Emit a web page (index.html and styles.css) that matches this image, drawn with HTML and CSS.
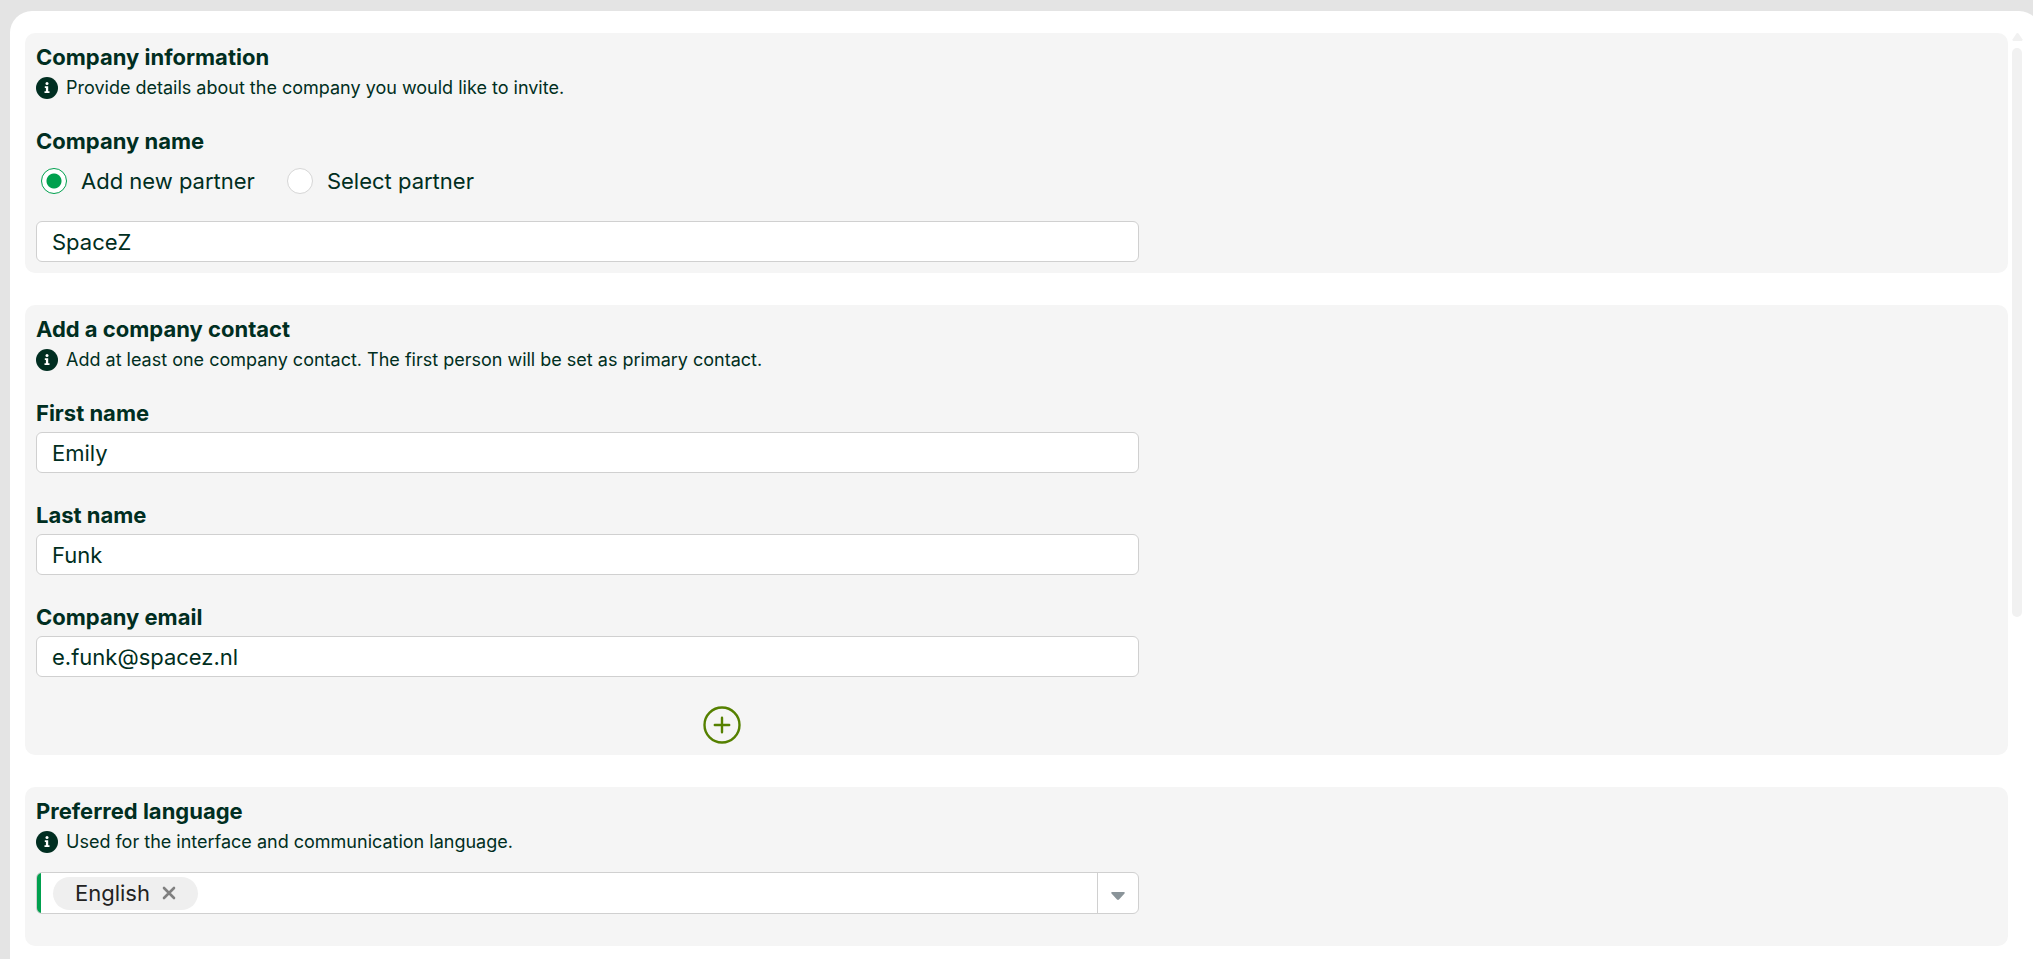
FILE: index.html
```html
<!DOCTYPE html>
<html lang="en">
<head>
    <meta charset="UTF-8">
    <meta name="viewport" content="width=device-width, initial-scale=1.0">
    <title>Invite company</title>
    <link rel="stylesheet" href="styles.css">
</head>
<body>
    <!-- Info icon shared by the hints -->
    <svg class="sprite" aria-hidden="true">
        <symbol id="icon-info" viewBox="0 0 22 22">
            <circle cx="11" cy="11" r="11" fill="#002e21"/>
            <circle cx="11" cy="6.6" r="1.5" fill="#fff"/>
            <path d="M8.8 9.2h3.4v5h1.3v1.8H8.5v-1.8h1.4V11H8.8z" fill="#fff"/>
        </symbol>
    </svg>

    <div class="panel">
        <form class="sections">
            <!-- Company information -->
            <section class="card">
                <h2>Company information</h2>
                <p class="hint">
                    <svg class="hint-icon" aria-hidden="true"><use href="#icon-info"/></svg>
                    Provide details about the company you would like to invite.
                </p>

                <div class="field">
                    <label for="companyName">Company name</label>
                    <div class="radios">
                        <label class="radio"><input type="radio" name="partner" value="new" checked> Add new partner</label>
                        <label class="radio"><input type="radio" name="partner" value="existing"> Select partner</label>
                    </div>
                    <input class="text-input" type="text" id="companyName" value="SpaceZ">
                </div>
            </section>

            <!-- Company contact -->
            <section class="card">
                <h2>Add a company contact</h2>
                <p class="hint">
                    <svg class="hint-icon" aria-hidden="true"><use href="#icon-info"/></svg>
                    Add at least one company contact. The first person will be set as primary contact.
                </p>

                <div class="field">
                    <label for="firstName">First name</label>
                    <input class="text-input" type="text" id="firstName" value="Emily">
                </div>
                <div class="field">
                    <label for="lastName">Last name</label>
                    <input class="text-input" type="text" id="lastName" value="Funk">
                </div>
                <div class="field">
                    <label for="companyEmail">Company email</label>
                    <input class="text-input" type="email" id="companyEmail" value="e.funk@spacez.nl">
                </div>

                <div class="add-row">
                    <button class="add-button" type="button" aria-label="Add contact">
                        <svg viewBox="0 0 38 38" fill="none" stroke="#558000" stroke-width="2.4" stroke-linecap="round" aria-hidden="true">
                            <circle cx="19" cy="19" r="17.5"/>
                            <path d="M19 11.8v14.4M11.8 19h14.4"/>
                        </svg>
                    </button>
                </div>
            </section>

            <!-- Preferred language -->
            <section class="card card-language">
                <h2><label for="language">Preferred language</label></h2>
                <p class="hint">
                    <svg class="hint-icon" aria-hidden="true"><use href="#icon-info"/></svg>
                    Used for the interface and communication language.
                </p>

                <div class="tag-select">
                    <span class="tag">
                        English
                        <button class="tag-remove" type="button" aria-label="Remove English">
                            <svg viewBox="0 0 14 14" stroke="#808080" stroke-width="2.6" stroke-linecap="round" aria-hidden="true">
                                <path d="M2 2l10 10M12 2L2 12"/>
                            </svg>
                        </button>
                    </span>
                    <select id="language">
                        <option value=""></option>
                    </select>
                    <span class="arrow">
                        <svg viewBox="0 0 14 8" aria-hidden="true">
                            <path d="M1 0h12q1.5.6.5 1.6L8 7.500q-1 .9-2 0L.5 1.600Q-.5.6 1 0z" fill="#8a9499"/>
                        </svg>
                    </span>
                </div>
            </section>
        </form>

        <div class="scrollbar" aria-hidden="true">
            <svg class="scroll-up" viewBox="0 0 12 9"><path d="M6 0q.8 0 1.4.8L11.500 7q.6 2-1 2h-9q-1.600 0-1-2L4.600.8Q5.200 0 6 0z" fill="#f1f1f1"/></svg>
            <div class="scroll-thumb"></div>
        </div>
    </div>
</body>
</html>
```

FILE: styles.css
```css
* {
    box-sizing: border-box;
}

body {
    font-family: Inter, Arial, sans-serif;
    font-size: 22px;
    line-height: 26px;
    margin: 0;
    background-color: #e4e4e4;
    color: #002e21;
    overflow: hidden;
}

.sprite {
    display: none;
}

/* White panel, runs past the right edge of the window */
.panel {
    display: flex;
    gap: 4px;
    height: calc(100vh - 11px);
    margin: 11px -8px 0 10px;
    padding: 22px 19px 0 15px;
    background: #fff;
    border-radius: 22px 22px 0 0;
}

.sections {
    flex: 1;
    display: flex;
    flex-direction: column;
    gap: 32px;
}

/* Cards */
.card {
    padding: 11px;
    background: #f5f5f5;
    border-radius: 10px;
}

.card-language {
    padding-bottom: 32px;
}

h2 {
    margin: 0 0 7px;
    font-size: 22px;
    font-weight: 700;
}

.hint {
    display: flex;
    align-items: center;
    gap: 8px;
    margin: 0;
    font-size: 18px;
    line-height: 22px;
}

.hint-icon {
    width: 22px;
    height: 22px;
}

/* Fields */
.field {
    display: flex;
    flex-direction: column;
    gap: 6px;
    margin-top: 29px;
}

.field > label {
    font-weight: 700;
}

.text-input {
    width: 56.25%;
    height: 41px;
    padding: 0 15px;
    border: 1px solid #d0d0d0;
    border-radius: 6px;
    background: #fff;
    color: inherit;
    font: inherit;
}

.radios {
    display: flex;
    gap: 32px;
    margin: 8px 0 21px 5px;
}

.radio {
    display: flex;
    align-items: center;
    gap: 14px;
}

.radio input {
    appearance: none;
    width: 26px;
    height: 26px;
    margin: 0;
    border: 1px solid #d6d6d6;
    border-radius: 50%;
    background: #fff;
}

.radio input:checked {
    border-color: #00a04e;
    background: radial-gradient(circle, #00a04e 7px, #fff 8px);
}

.add-row {
    display: flex;
    justify-content: center;
    width: 70%;
    margin-top: 29px;
}

.add-button {
    width: 38px;
    height: 38px;
    padding: 0;
    border: none;
    background: none;
    cursor: pointer;
}

.add-button svg,
.tag-remove svg {
    display: block;
}

/* Language select with removable tags */
.tag-select {
    display: flex;
    align-items: center;
    width: 56.25%;
    height: 42px;
    margin-top: 19px;
    border: 1px solid #d0d0d0;
    border-radius: 6px;
    background: linear-gradient(to right, #00a04e 4px, #fff 4px);
}

.tag {
    display: flex;
    align-items: center;
    gap: 12px;
    height: 33px;
    margin-left: 16px;
    padding: 0 22px;
    border-radius: 17px;
    background: #efefef;
    color: #222;
}

.tag-remove {
    width: 14px;
    height: 14px;
    padding: 0;
    border: none;
    background: none;
    cursor: pointer;
}

.tag-select select {
    appearance: none;
    flex: 1;
    height: 40px;
    border: none;
    background: none;
    font: inherit;
}

.arrow {
    display: flex;
    align-items: center;
    justify-content: center;
    width: 41px;
    height: 40px;
    padding-top: 6px;
    border-left: 1px solid #d0d0d0;
}

.arrow svg {
    width: 14px;
    height: 8px;
}

/* Scrollbar */
.scrollbar {
    display: flex;
    flex-direction: column;
    align-items: center;
    gap: 7px;
    width: 10px;
}

.scroll-up {
    width: 11px;
    height: 8px;
}

.scroll-thumb {
    width: 10px;
    height: 61.5%;
    border-radius: 5px;
    background: #f1f1f1;
}
```
